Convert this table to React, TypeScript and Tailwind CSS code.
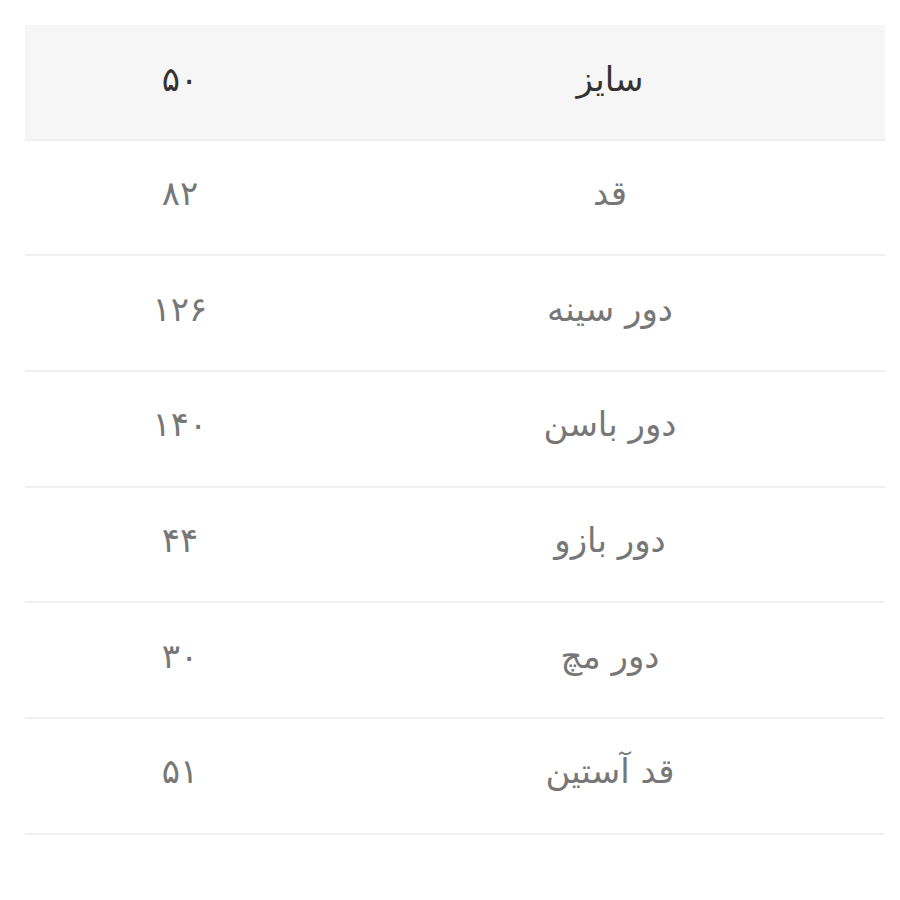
const rows: [string, string][] = [
  ["قد", "۸۲"],
  ["دور سینه", "۱۲۶"],
  ["دور باسن", "۱۴۰"],
  ["دور بازو", "۴۴"],
  ["دور مچ", "۳۰"],
  ["قد آستین", "۵۱"],
];

export default function App() {
  return (
    <div className="min-h-[900px] w-[900px] bg-white pt-[25px] pl-[25px]" style={{ fontFamily: '"DejaVu Sans", sans-serif' }}>
      <div dir="rtl" className="w-[860px]">
        <div className="flex h-[115.7px] items-center border-b-2 border-[#efefef] bg-[#f6f6f6] text-[34px] text-[#333]">
          <div className="w-[550px] pb-1 text-center">سایز</div>
          <div className="w-[310px] pb-1 text-center">۵۰</div>
        </div>
        {rows.map(([label, value]) => (
          <div key={label} className="flex h-[115.7px] items-center border-b-2 border-[#efefef] text-[34px] text-[#777]">
            <div className="w-[550px] pb-2 text-center">{label}</div>
            <div className="w-[310px] pb-2 text-center">{value}</div>
          </div>
        ))}
      </div>
    </div>
  );
}
